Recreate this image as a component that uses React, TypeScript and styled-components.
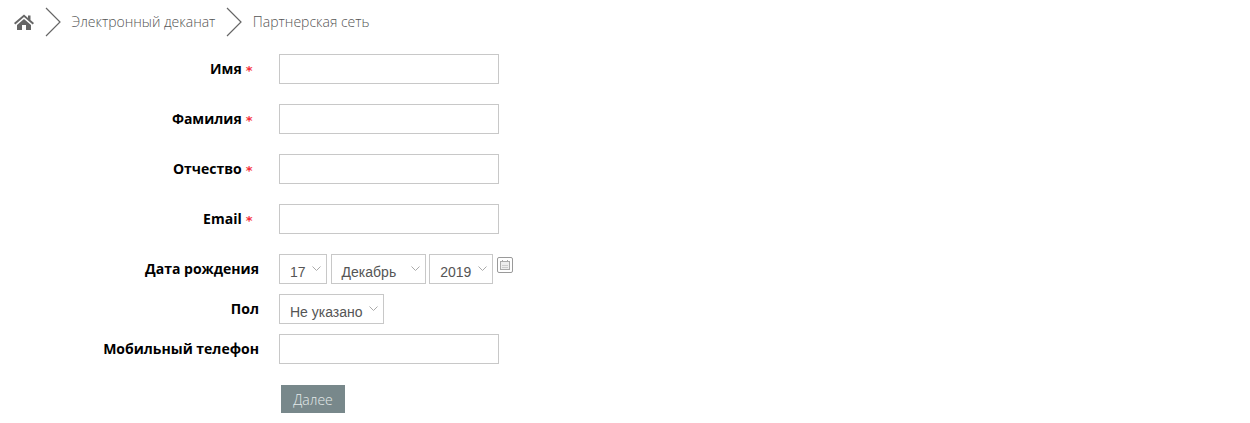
import { createGlobalStyle } from "styled-components";
import styled from "styled-components";

const GlobalStyle = createGlobalStyle`
  html, body {
    margin: 0;
    padding: 0;
    background: #fff;
    font-family: "Open Sans", sans-serif;
  }
`;

const Page = styled.div`
  width: 1250px;
  height: 423px;
  overflow: hidden;
`;

const Breadcrumbs = styled.nav`
  display: flex;
  align-items: center;
  height: 44px;
  padding-left: 14px;
  font-size: 14px;
  font-weight: 300;
  color: #555;
`;

const Crumb = styled.span`
  line-height: 44px;
`;

const Chevron = styled.svg`
  width: 16px;
  height: 30px;
  margin: 0 10.5px 0 11px;
  flex: none;
`;

const Form = styled.form`
  display: flex;
  flex-direction: column;
  padding-top: 10px;
`;

const Row = styled.div<{ $height: number }>`
  display: flex;
  align-items: flex-start;
  height: ${(props) => props.$height}px;
`;

const Label = styled.label<{ $required?: boolean }>`
  width: 259px;
  padding-right: ${(props) => (props.$required ? 6.5 : 0)}px;
  box-sizing: border-box;
  margin-right: 20px;
  text-align: right;
  font-size: 14px;
  font-weight: 700;
  line-height: 30px;
  color: #000;
`;

const Star = styled.span`
  color: #f5303a;
  font-family: "DejaVu Sans", sans-serif;
  font-size: 13px;
  font-weight: 700;
  margin-left: 4px;
  vertical-align: -1px;
`;

const Input = styled.input`
  width: 220px;
  height: 30px;
  box-sizing: border-box;
  border: 1px solid #c8c8c8;
  background: #fff;
  outline: none;
`;

const Controls = styled.div`
  display: flex;
  gap: 3.6px;
`;

const SelectBox = styled.div<{ $width: number }>`
  position: relative;
  width: ${(props) => props.$width}px;
  height: 30px;
  box-sizing: border-box;
  border: 1px solid #c8c8c8;
  padding-left: 10px;
  font-family: "Liberation Sans", Arial, sans-serif;
  font-size: 14px;
  line-height: 34px;
  color: #555;
`;

const Caret = styled.svg`
  position: absolute;
  top: 11px;
  right: 5px;
  width: 9px;
  height: 5px;
`;

const CalendarButton = styled.button`
  width: 16px;
  height: 16px;
  padding: 0;
  margin: 3px 0 0 0.4px;
  border: 1px solid #9a9a9a;
  border-radius: 2px;
  background: #fff;
  display: flex;
  align-items: center;
  justify-content: center;
`;

const Actions = styled.div`
  padding: 11px 0 0 281px;
`;

const Submit = styled.button`
  width: 64px;
  height: 28px;
  padding: 0;
  border: none;
  background: #78888b;
  color: #e4eaea;
  font-family: "Open Sans", sans-serif;
  font-size: 14px;
  font-weight: 300;
`;

function Select({ value, width }: { value: string; width: number }) {
  return (
    <SelectBox $width={width}>
      {value}
      <Caret viewBox="0 0 9 5">
        <path d="M0.5 0.5 L4.5 4.5 L8.5 0.5" fill="none" stroke="#aaa" strokeWidth="1" />
      </Caret>
    </SelectBox>
  );
}

function Separator() {
  return (
    <Chevron viewBox="0 0 16 30">
      <path d="M1 1 L15 15 L1 29" fill="none" stroke="#666" strokeWidth="1.2" />
    </Chevron>
  );
}

const textFields = ["Имя", "Фамилия", "Отчество", "Email"];

export default function App() {
  return (
    <Page>
      <GlobalStyle />
      <Breadcrumbs>
        <svg width="20" height="16" viewBox="0 0 20 16">
          <path d="M10 0.5 L0 9 L1.3 10.4 L10 3 L18.7 10.4 L20 9 L16.5 6 V1.5 H14 V3.9 Z" fill="#666" />
          <path d="M3 11 L10 5 L17 11 V16 H12 V11 H8 V16 H3 Z" fill="#666" />
        </svg>
        <Separator />
        <Crumb>Электронный деканат</Crumb>
        <Separator />
        <Crumb>Партнерская сеть</Crumb>
      </Breadcrumbs>
      <Form>
        {textFields.map((name) => (
          <Row $height={50} key={name}>
            <Label $required>
              {name}
              <Star>*</Star>
            </Label>
            <Input />
          </Row>
        ))}
        <Row $height={40}>
          <Label>Дата рождения</Label>
          <Controls>
            <Select value="17" width={48} />
            <Select value="Декабрь" width={95} />
            <Select value="2019" width={64} />
            <CalendarButton type="button">
              <svg width="12" height="12" viewBox="0 0 12 12">
                <rect x="1.5" y="2.5" width="9" height="8" fill="#eee" stroke="#aaa" />
                <path d="M3.5 1 V3 M8.5 1 V3" stroke="#aaa" />
                <path d="M3 6.5 H9 M3 8.5 H9" stroke="#ccc" />
              </svg>
            </CalendarButton>
          </Controls>
        </Row>
        <Row $height={40}>
          <Label>Пол</Label>
          <Select value="Не указано" width={105} />
        </Row>
        <Row $height={40}>
          <Label>Мобильный телефон</Label>
          <Input />
        </Row>
        <Actions>
          <Submit type="button">Далее</Submit>
        </Actions>
      </Form>
    </Page>
  );
}
